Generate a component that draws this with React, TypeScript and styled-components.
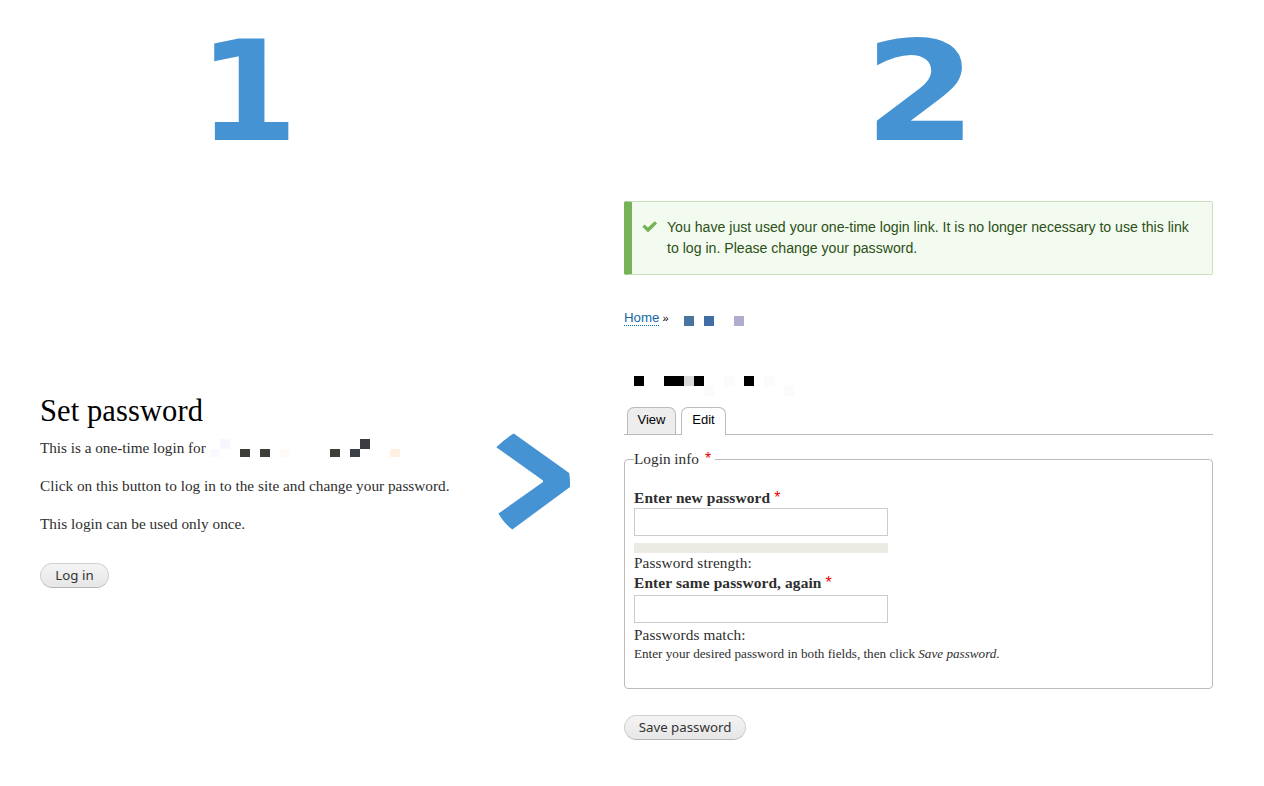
import React from "react";
import styled, { createGlobalStyle } from "styled-components";

const serif = '"Liberation Serif", "Times New Roman", serif';
const sans = '"Liberation Sans", Arial, sans-serif';
const blue = "#4593d3";

const GlobalStyle = createGlobalStyle`
  * { box-sizing: border-box; }
  body { margin: 0; background: #fff; }
`;

const Page = styled.main`
  display: grid;
  grid-template-columns: 584px 589px;
  width: 1264px;
  height: 786px;
  padding-left: 40px;
  overflow: hidden;
  font: 15.3px/17px ${serif};
  letter-spacing: 0;
  color: #2e2e2e;
`;

const Step = styled.section`
  display: flex;
  flex-direction: column;
`;

const Numeral = styled.div<{ $indent: number; $stretch: number }>`
  height: 139px;
  margin: 23px 0 0 ${(p) => p.$indent}px;
  font: bold 138.5px/139px "DejaVu Sans", sans-serif;
  letter-spacing: 0;
  color: ${blue};
  transform: scaleX(${(p) => p.$stretch});
  transform-origin: left center;
`;

const Intro = styled.div`
  display: flex;
  margin-top: 230px;
`;

const Copy = styled.div`
  width: 456px;
`;

const Title = styled.h1`
  margin: 0 0 10px;
  padding-top: 1px;
  font: 30.5px/36px ${serif};
  letter-spacing: 0.1px;
  color: #000;
`;

const Paragraph = styled.p`
  display: flex;
  height: 19px;
  margin: 0 0 19px;
`;

const LoginAction = styled.div`
  margin-top: 29px;
`;

const Arrow = styled.svg`
  margin-top: 41px;
`;

const Button = styled.button<{ $width: number }>`
  display: block;
  width: ${(p) => p.$width}px;
  height: 25px;
  padding: 0 0 1px;
  border: 1px solid #cfcfcf;
  border-bottom-color: #b4b4b4;
  border-radius: 13px;
  background: linear-gradient(#f4f4f4, #e6e6e6);
  font: 13.3px/22px "Noto Sans", sans-serif;
  letter-spacing: 0;
  color: #333;
`;

const Status = styled.div`
  display: flex;
  height: 74px;
  margin-top: 39px;
  padding: 15px 0 0 10px;
  border: 1px solid #c9e1bd;
  border-left: 8px solid #77b259;
  border-radius: 2px;
  background: #f3faef;
  font: 14.12px/21px ${sans};
  letter-spacing: 0;
  white-space: nowrap;

  svg { flex: none; margin: 2px 9px 0 0; }
  p { margin: 0; color: #2c5018; }
`;

const Breadcrumb = styled.nav`
  display: flex;
  height: 20px;
  margin-top: 34px;
  font: 13.3px/18px ${sans};
  letter-spacing: 0;

  a {
    height: 17px;
    margin-right: 3px;
    border-bottom: 1px dotted #0071b3;
    color: #1268a8;
    text-decoration: none;
  }
`;

const Separator = styled.span`
  width: 7px;
  font-size: 11px;
  color: #000;
`;

const AccountName = styled.div`
  height: 20px;
  margin-top: 47px;
`;

const Tabs = styled.div`
  display: flex;
  gap: 5px;
  height: 28px;
  margin-top: 11px;
  padding-left: 3px;
  border-bottom: 1px solid #bbb;
`;

const Tab = styled.div<{ $active?: boolean; $width: number }>`
  width: ${(p) => p.$width}px;
  height: ${(p) => (p.$active ? 28 : 27)}px;
  border: 1px solid #bbb;
  border-bottom: 0;
  border-radius: 7px 7px 0 0;
  background: ${(p) => (p.$active ? "#fff" : "#ededed")};
  font: 13px/23px ${sans};
  letter-spacing: 0;
  text-align: center;
  color: #000;
`;

const Fieldset = styled.fieldset`
  height: 239px;
  margin: 15px 0 26px;
  padding: 0 9px;
  border: 1px solid #bbb;
  border-radius: 4px;
`;

const Legend = styled.legend`
  height: 19px;
  padding: 0 4px 0 0;
`;

const Required = styled.span<{ $gap: number }>`
  margin-left: ${(p) => p.$gap}px;
  font: 16px/15px ${sans};
  letter-spacing: 0;
  color: #e00;
`;

const Label = styled.label`
  display: block;
  height: 20px;
  font-size: 15.4px;
  font-weight: bold;
  line-height: 19px;
  letter-spacing: 0.12px;
`;

const NewPassword = styled.div`
  margin-top: 19px;
`;

const Input = styled.input`
  display: block;
  width: 254px;
  height: 28px;
  padding: 0 4px;
  border: 1px solid #ccc;
  background: #fff;
`;

const Meter = styled.div`
  width: 254px;
  height: 10px;
  margin-top: 7px;
  background: #ebebe4;
`;

const Hint = styled.div<{ $top: number; $height: number }>`
  height: ${(p) => p.$height}px;
  margin-top: ${(p) => p.$top}px;
  letter-spacing: 0.1px;
`;

const RepeatPassword = styled.div`
  ${Label} { height: 22px; }
`;

const Description = styled.div`
  font-size: 13.17px;
  line-height: 19px;
`;

type Block = [x: number, y: number, color: string, height?: number];

const Mosaic = ({ width, blocks }: { width: number; blocks: Block[] }) => (
  <svg width={width} height="20" shapeRendering="crispEdges" aria-hidden="true">
    {blocks.map(([x, y, color, h = 10]) => (
      <rect key={`${x}-${y}`} x={x} y={y} width="10" height={h} fill={color} />
    ))}
  </svg>
);

const userBlocks: Block[] = [
  [10, 0, "#f7f8ff"],
  [150, 0, "#3c3d42"],
  [0, 10, "#f9f9ff", 8],
  [30, 10, "#3d4038", 8],
  [50, 10, "#3d4038", 8],
  [70, 10, "#fffaf7", 8],
  [120, 10, "#3d4038", 8],
  [140, 10, "#3b4046", 8],
  [180, 10, "#fff0e1", 8],
];

const crumbBlocks: Block[] = [
  [0, 7, "#49749f"],
  [20, 7, "#416da6"],
  [50, 7, "#aeadce"],
];

const nameBlocks: Block[] = [
  [10, 0, "#000"],
  [40, 0, "#000"],
  [50, 0, "#000"],
  [60, 0, "#d9d9d9"],
  [70, 0, "#000"],
  [100, 0, "#fbfbfb"],
  [120, 0, "#000"],
  [140, 0, "#fbfbfb"],
  [80, 10, "#fbfbfb"],
  [160, 10, "#fbfbfb"],
];

const LoginSentence = styled.span`
  width: 170px;
  font-size: 15.2px;
  white-space: nowrap;
`;

const CrumbMosaic = styled.span`
  margin-left: 15px;
`;

export default function App() {
  return (
    <>
      <GlobalStyle />
      <Page>
        <Step>
          <Numeral $indent={158} $stretch={1.04}>1</Numeral>
          <Intro>
            <Copy>
              <Title>Set password</Title>
              <Paragraph>
                <LoginSentence>This is a one-time login for</LoginSentence>
                <Mosaic width={200} blocks={userBlocks} />
              </Paragraph>
              <Paragraph>Click on this button to log in to the site and change your password.</Paragraph>
              <Paragraph>This login can be used only once.</Paragraph>
              <LoginAction><Button $width={69}>Log in</Button></LoginAction>
            </Copy>
            <Arrow width="75" height="97" viewBox="0 0 75 97" fill={blue} aria-hidden="true">
              <path d="M.3 14.3Q8.5 6 17.8.6L73.2 40Q74.3 47 74 54L16.3 96.5Q7.5 90 2.5 80.6L47 49V47.5Z" />
            </Arrow>
          </Intro>
        </Step>
        <Step>
          <Numeral $indent={240} $stretch={1.17}>2</Numeral>
          <Status>
            <svg width="16" height="16" viewBox="0 0 16 16" fill="#73b355" aria-hidden="true">
              <path d="M.4 7.7 2.6 5.4 5.9 8.5 12.8 2.2 15.1 4.5 6 13.4Z" />
            </svg>
            <p>
              You have just used your one-time login link. It is no longer necessary to use this link
              <br />
              to log in. Please change your password.
            </p>
          </Status>
          <Breadcrumb>
            <a>Home</a>
            <Separator>»</Separator>
            <CrumbMosaic><Mosaic width={70} blocks={crumbBlocks} /></CrumbMosaic>
          </Breadcrumb>
          <AccountName><Mosaic width={180} blocks={nameBlocks} /></AccountName>
          <Tabs>
            <Tab $width={49}>View</Tab>
            <Tab $width={45} $active>Edit</Tab>
          </Tabs>
          <Fieldset>
            <Legend>Login info<Required $gap={6}>*</Required></Legend>
            <NewPassword>
              <Label>Enter new password<Required $gap={4}>*</Required></Label>
              <Input type="password" />
              <Meter />
            </NewPassword>
            <Hint $top={1} $height={19}>Password strength:</Hint>
            <RepeatPassword>
              <Label>Enter same password, again<Required $gap={4}>*</Required></Label>
              <Input type="password" />
            </RepeatPassword>
            <Hint $top={3} $height={18}>Passwords match:</Hint>
            <Description>
              Enter your desired password in both fields, then click <em>Save password</em>.
            </Description>
          </Fieldset>
          <Button $width={122}>Save password</Button>
        </Step>
      </Page>
    </>
  );
}
